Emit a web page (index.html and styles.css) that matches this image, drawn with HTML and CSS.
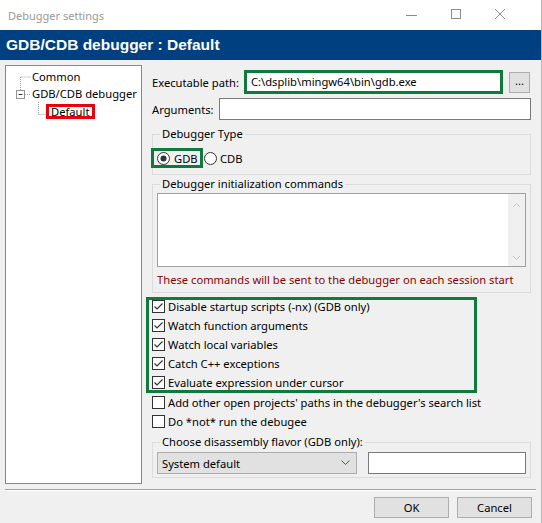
FILE: index.html
```html
<!DOCTYPE html>
<html>
<head>
<meta charset="utf-8">
<link rel="stylesheet" href="styles.css">
</head>
<body>
<div class="window">
  <div class="titlebar">
    <span class="title">Debugger settings</span>
    <svg class="controls" width="110" height="30" viewBox="0 0 110 30">
      <line x1="6" y1="15.5" x2="17" y2="15.5" stroke="#8a8a8a" stroke-width="1"/>
      <rect x="51.5" y="9.5" width="9" height="9" fill="none" stroke="#8a8a8a" stroke-width="1"/>
      <path d="M95 9 L105 19 M105 9 L95 19" stroke="#8a8a8a" stroke-width="1" fill="none"/>
    </svg>
  </div>
  <div class="header">GDB/CDB debugger : Default</div>
  <div class="main">
    <div class="tree">
      <div class="trow">
        <svg class="tlines" width="26" height="17" viewBox="0 0 26 17">
          <path d="M14.5 9 V17 M14.5 9 H25" stroke="#a0a0a0" stroke-dasharray="1 1" fill="none"/>
        </svg>
        <span>Common</span>
      </div>
      <div class="trow">
        <svg class="tlines" width="26" height="17" viewBox="0 0 26 17">
          <path d="M14.5 0 V5" stroke="#a0a0a0" stroke-dasharray="1 1" fill="none"/>
          <rect x="10.5" y="5.5" width="8" height="8" fill="#fff" stroke="#919191"/>
          <path d="M12.5 9.5 H16.5" stroke="#333"/>
          <path d="M19 9.5 H25" stroke="#a0a0a0" stroke-dasharray="1 1" fill="none"/>
        </svg>
        <span>GDB/CDB debugger</span>
      </div>
      <div class="trow">
        <svg class="tlines" width="40" height="17" viewBox="0 0 40 17">
          <path d="M32.5 0 V12.5 M32.5 12.5 H40" stroke="#a0a0a0" stroke-dasharray="1 1" fill="none"/>
        </svg>
        <span class="redbox">Default</span>
      </div>
    </div>
    <div class="panel">
      <div class="row-exec">
        <span class="lbl-exec">Executable path:</span>
        <div class="greeninput">C:\dsplib\mingw64\bin\gdb.exe</div>
        <div class="btn-dots">...</div>
      </div>
      <div class="row-args">
        <span class="lbl-args">Arguments:</span>
        <div class="input"></div>
      </div>
      <fieldset class="group g-type">
        <legend>Debugger Type</legend>
        <div class="radios">
          <div class="greenradio">
            <svg class="radio" width="13" height="13" viewBox="0 0 13 13"><circle cx="6.5" cy="6.5" r="6" fill="#fff" stroke="#333"/><circle cx="6.5" cy="6.5" r="3" fill="#333"/></svg>
            <span>GDB</span>
          </div>
          <div class="radioitem">
            <svg class="radio" width="13" height="13" viewBox="0 0 13 13"><circle cx="6.5" cy="6.5" r="6" fill="#fff" stroke="#333"/></svg>
            <span>CDB</span>
          </div>
        </div>
      </fieldset>
      <fieldset class="group g-init">
        <legend>Debugger initialization commands</legend>
        <div class="textarea">
          <div class="scroll">
            <svg width="17" height="72" viewBox="0 0 17 72"><path d="M5 13 L8.5 9.5 L12 13" stroke="#c2c2c2" fill="none"/><path d="M5 62 L8.5 65.5 L12 62" stroke="#c2c2c2" fill="none"/></svg>
          </div>
        </div>
        <div class="note">These commands will be sent to the debugger on each session start</div>
      </fieldset>
      <div class="greenchecks">
        <div class="crow"><svg class="cb" width="13" height="13" viewBox="0 0 13 13"><rect x="0.5" y="0.5" width="12" height="12" fill="#fff" stroke="#333"/><path d="M2.5 6.5 L5 9 L10.5 3.5" stroke="#333" stroke-width="1.2" fill="none"/></svg><span>Disable startup scripts (-nx) (GDB only)</span></div>
        <div class="crow"><svg class="cb" width="13" height="13" viewBox="0 0 13 13"><rect x="0.5" y="0.5" width="12" height="12" fill="#fff" stroke="#333"/><path d="M2.5 6.5 L5 9 L10.5 3.5" stroke="#333" stroke-width="1.2" fill="none"/></svg><span>Watch function arguments</span></div>
        <div class="crow"><svg class="cb" width="13" height="13" viewBox="0 0 13 13"><rect x="0.5" y="0.5" width="12" height="12" fill="#fff" stroke="#333"/><path d="M2.5 6.5 L5 9 L10.5 3.5" stroke="#333" stroke-width="1.2" fill="none"/></svg><span>Watch local variables</span></div>
        <div class="crow"><svg class="cb" width="13" height="13" viewBox="0 0 13 13"><rect x="0.5" y="0.5" width="12" height="12" fill="#fff" stroke="#333"/><path d="M2.5 6.5 L5 9 L10.5 3.5" stroke="#333" stroke-width="1.2" fill="none"/></svg><span>Catch C++ exceptions</span></div>
        <div class="crow"><svg class="cb" width="13" height="13" viewBox="0 0 13 13"><rect x="0.5" y="0.5" width="12" height="12" fill="#fff" stroke="#333"/><path d="M2.5 6.5 L5 9 L10.5 3.5" stroke="#333" stroke-width="1.2" fill="none"/></svg><span>Evaluate expression under cursor</span></div>
      </div>
      <div class="crow"><svg class="cb" width="13" height="13" viewBox="0 0 13 13"><rect x="0.5" y="0.5" width="12" height="12" fill="#fff" stroke="#333"/></svg><span>Add other open projects' paths in the debugger's search list</span></div>
      <div class="crow"><svg class="cb" width="13" height="13" viewBox="0 0 13 13"><rect x="0.5" y="0.5" width="12" height="12" fill="#fff" stroke="#333"/></svg><span>Do *not* run the debugee</span></div>
      <fieldset class="group g-dis">
        <legend>Choose disassembly flavor (GDB only):</legend>
        <div class="disrow">
          <div class="select"><span>System default</span><svg width="9" height="6" viewBox="0 0 9 6"><path d="M0.5 0.5 L4.5 4.5 L8.5 0.5" stroke="#555" fill="none"/></svg></div>
          <div class="input dis-input"></div>
        </div>
      </fieldset>
    </div>
  </div>
  <div class="sep"></div>
  <div class="buttons">
    <div class="btn">OK</div>
    <div class="btn">Cancel</div>
  </div>
</div>
</body>
</html>
```

FILE: styles.css
```css
* { box-sizing: border-box; }
html, body { margin: 0; padding: 0; }
body {
  background: #f0f0f0;
  font-family: "Noto Sans", "DejaVu Sans", sans-serif;
  font-size: 11.2px;
  color: #000;
  white-space: nowrap;
}
.window {
  width: 542px;
  height: 523px;
  border-right: 1px solid #b9b9b9;
  background: #f0f0f0;
  overflow: hidden;
}
.titlebar {
  height: 30px;
  background: #fff;
  display: flex;
  align-items: center;
}
.title {
  padding-left: 8px;
  color: #999;
  font-size: 11px;
}
.controls { margin-left: auto; margin-right: 31px; display: block; }
.header {
  height: 30px;
  background: #004080;
  color: #fff;
  font-family: "Liberation Sans", Arial, sans-serif;
  font-weight: bold;
  font-size: 15.5px;
  line-height: 30px;
  padding-left: 6px;
}
.main {
  display: flex;
  padding: 5px 5px 0 5px;
}
.tree {
  width: 137px;
  height: 419px;
  flex: none;
  background: #fff;
  border: 1px solid #828790;
  padding-top: 2px;
}
.trow {
  height: 17px;
  display: flex;
  align-items: center;
  line-height: 17px;
}
.tlines { display: block; flex: none; }
.redbox {
  display: inline-block;
  height: 15px;
  line-height: 9px;
  padding: 0 3px 0 2px;
  border: 3px solid #e8000b;
  margin-top: 1px;
}
.panel {
  flex: 1;
  min-width: 0;
  margin-left: 5px;
  padding: 0 5px;
}
.row-exec {
  margin-top: 5px;
  height: 24px;
  display: flex;
  align-items: center;
}
.lbl-exec { width: 92px; flex: none; }
.greeninput {
  width: 259px;
  height: 24px;
  border: 3px solid #0e7a3e;
  background: #fff;
  padding-left: 4px;
  line-height: 18px;
  flex: none;
}
.btn-dots {
  margin-left: 6px;
  width: 21px;
  height: 21px;
  background: #e1e1e1;
  border: 1px solid #adadad;
  text-align: center;
  line-height: 16px;
  flex: none;
}
.row-args {
  margin-top: 4px;
  height: 22px;
  display: flex;
  align-items: center;
}
.lbl-args { width: 67px; flex: none; }
.input {
  background: #fff;
  border: 1px solid #7a7a7a;
  height: 22px;
}
.row-args .input { flex: 1; }
.group {
  margin: 0;
  padding: 0;
  border: 1px solid #dcdcdc;
  min-width: 0;
}
.group legend {
  padding: 0 2px;
  margin-left: 7px;
  line-height: 14px;
  height: 14px;
}
.g-type { margin-top: 7px; padding-bottom: 6px; }
.radios { display: flex; margin-top: 7px; }
.radio { display: block; flex: none; }
.greenradio {
  display: flex;
  align-items: center;
  width: 52px;
  height: 20px;
  margin-left: -2px;
  padding-left: 6px;
  box-shadow: inset 0 0 0 3px #0e7a3e;
  gap: 4px;
}
.radioitem {
  display: flex;
  align-items: center;
  height: 20px;
  margin-left: 1px;
  gap: 3px;
}
.g-init { margin-top: 2px; padding-bottom: 4px; }
.textarea {
  margin: 2px 4px 0 4px;
  height: 74px;
  background: #fff;
  border: 1px solid #a0a0a0;
  display: flex;
  justify-content: flex-end;
}
.scroll { width: 17px; background: #f0f0f0; }
.scroll svg { display: block; }
.note {
  margin-top: 5px;
  padding-left: 4px;
  line-height: 16px;
  color: #8b0000;
}
.greenchecks {
  margin-top: 4px;
  margin-left: -6px;
  width: 331px;
  padding: 0 0 1px 6px;
  box-shadow: inset 0 0 0 3px #0e7a3e;
}
.crow {
  height: 19px;
  display: flex;
  align-items: center;
  gap: 3px;
}
.cb { display: block; flex: none; }
.g-dis { margin-top: 4px; padding-bottom: 3px; }
.disrow { display: flex; margin-top: 3px; }
.select {
  margin-left: 4px;
  width: 200px;
  height: 22px;
  background: #e1e1e1;
  border: 1px solid #adadad;
  display: flex;
  align-items: center;
  justify-content: space-between;
  padding: 0 6px 0 4px;
}
.dis-input { margin-left: 11px; width: 158px; }
.sep {
  margin: 5px 5px 0 5px;
  border-top: 1px solid #a0a0a0;
  border-bottom: 1px solid #fff;
}
.buttons {
  margin-top: 6px;
  display: flex;
  justify-content: flex-end;
  gap: 8px;
  padding-right: 9px;
}
.btn {
  width: 75px;
  height: 21px;
  background: #e1e1e1;
  border: 1px solid #adadad;
  text-align: center;
  line-height: 19px;
}
```
